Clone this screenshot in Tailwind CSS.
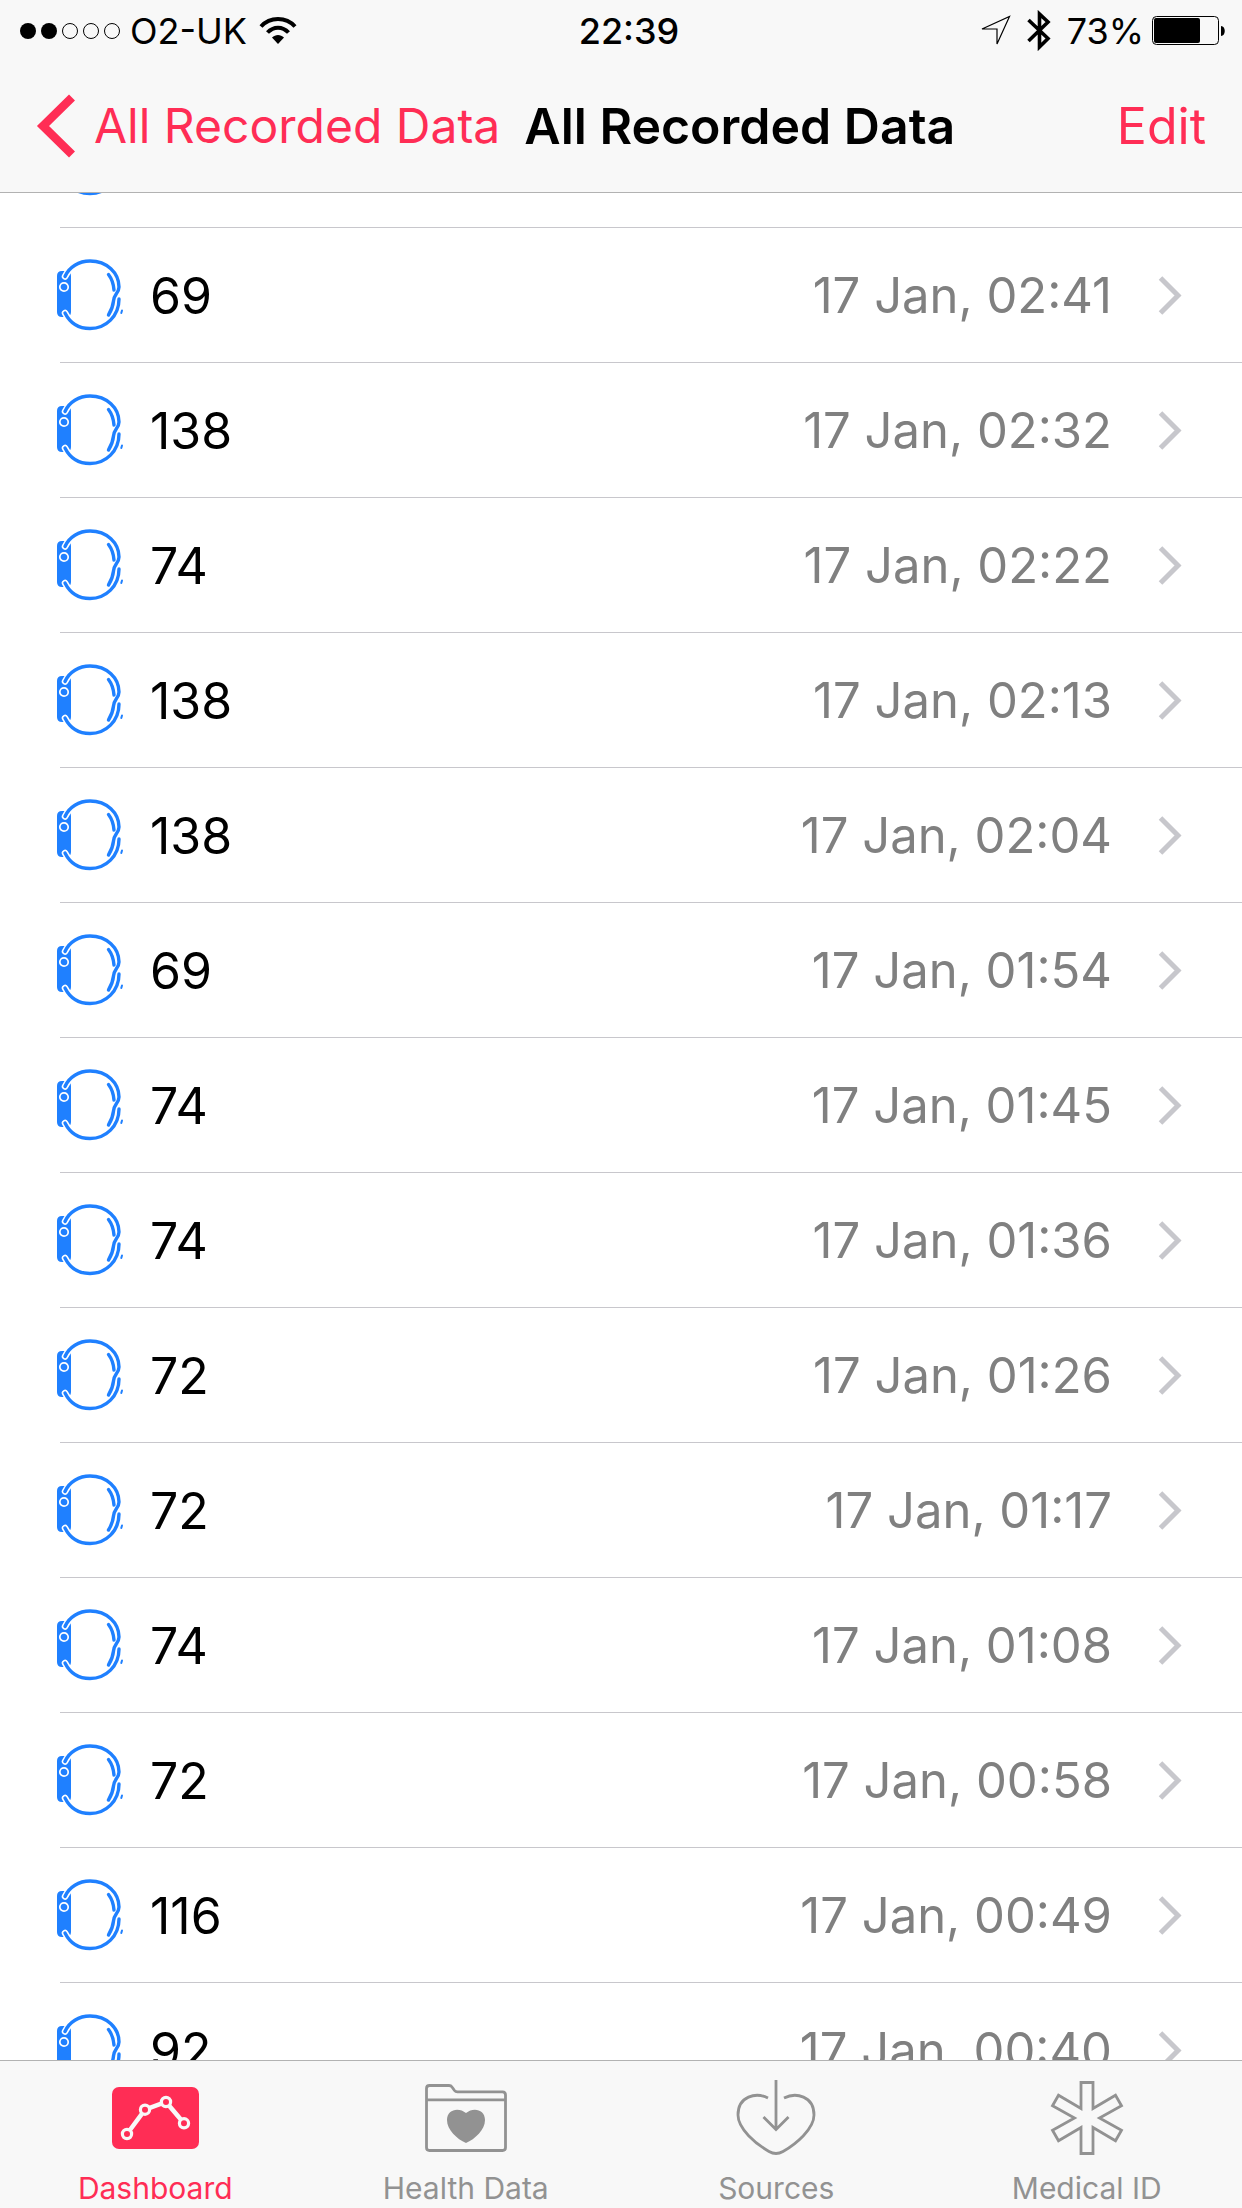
<!DOCTYPE html>
<html lang="en">
<head>
    <meta charset="UTF-8">
    <meta name="viewport" content="width=device-width, initial-scale=1.0">
    <title>All Recorded Data</title>
    <script src="https://cdn.jsdelivr.net/npm/@tailwindcss/browser@4"></script>
</head>
<body class="h-screen flex flex-col overflow-hidden bg-white text-black font-['Inter',sans-serif]">

    <!-- Shared icons -->
    <svg class="hidden" aria-hidden="true">
        <symbol id="watch" viewBox="-4 1 70 72" overflow="visible">
            <path d="M-3 17Q-3 12 2 12H6Q11 12 11 17V53Q11 58 6 58H2Q-3 58 -3 53Z" fill="#1f80ff"/>
            <g fill="none" stroke-linecap="round">
                <path d="M5 17.5L8 12.5M5 54L8 59" stroke="#fff" stroke-width="6.5"/>
                <circle cx="4" cy="28" r="4.2" stroke="#fff" stroke-width="1.7"/>
                <g stroke="#1f80ff" stroke-width="3.4">
                    <path d="M5 17.5C9 8 19 2 30 2C47 2 59 14 59 28C59 34 54 35 53.500 42C53 47 51 52 48.500 56"/>
                    <path d="M5 54C10 64 19 69.500 30 69.500C46 69.500 59 57 59 40"/>
                    <path d="M48.500 15.500C52 20 53.500 25 54 31"/>
                </g>
                <path d="M62 51.500L61.300 54" stroke="#1f80ff" stroke-width="2"/>
            </g>
        </symbol>
        <symbol id="chevron" viewBox="0 0 24 40">
            <path d="M2.500 2L20 19.500L2.500 37" fill="none" stroke="#c7c7cc" stroke-width="5"/>
        </symbol>
    </svg>

    <header class="shrink-0 bg-[#f8f8f8] border-b border-[#b2b2b2]">
        <div class="relative h-[60px] pt-px pl-5 pr-4 flex items-center justify-between text-[36px] leading-[60px]">
            <div class="flex items-center">
                <svg class="w-[102px] h-4" viewBox="0 0 102 16" role="img" aria-label="Signal strength">
                    <circle cx="8" cy="8" r="8"/>
                    <circle cx="29" cy="8" r="8"/>
                    <g fill="none" stroke="#000" stroke-width="1">
                        <circle cx="50" cy="8" r="7.500"/>
                        <circle cx="71" cy="8" r="7.500"/>
                        <circle cx="92" cy="8" r="7.500"/>
                    </g>
                </svg>
                <span class="ml-2">O2-UK</span>
                <svg class="ml-3 w-[38px] h-7" viewBox="0 0 38 28" role="img" aria-label="Wi-Fi">
                    <g fill="none" stroke="#000" stroke-width="4">
                        <path d="M2 9.500C11 -0.500 27 -0.500 36 9.500"/>
                        <path d="M8.500 15.500C14.500 9 23.500 9 29.500 15.500"/>
                    </g>
                    <path d="M13 20.500C16.500 17 21.500 17 25 20.500L19 27Z"/>
                </svg>
            </div>
            <span class="absolute left-1/2 -translate-x-1/2 ml-2 font-medium">22:39</span>
            <div class="flex items-center">
                <svg class="w-[31px] h-[31px]" viewBox="0 0 31 31" role="img" aria-label="Location">
                    <path d="M2 14L29.500 1.500L17 29V14Z" fill="none" stroke="#000" stroke-width="1.200"/>
                </svg>
                <svg class="ml-4 w-6 h-[42px]" viewBox="0 0 24 42" role="img" aria-label="Bluetooth">
                    <path d="M1.500 10L21 28.500L12.500 37V4L21 12L1.500 31" fill="none" stroke="#000" stroke-width="3.600"/>
                </svg>
                <span class="ml-4">73%</span>
                <svg class="ml-2 w-[74px] h-[30px]" viewBox="0 0 74 30" role="img" aria-label="Battery">
                    <rect x="0.500" y="0.500" width="66" height="28" rx="4" fill="none" stroke="#000" stroke-width="1"/>
                    <rect x="2" y="2" width="46" height="25" rx="2"/>
                    <path d="M69 10C74 10 74 20 69 20Z"/>
                </svg>
            </div>
        </div>
        <nav class="h-[132px] pl-9 pr-9 flex items-center whitespace-nowrap text-[50px] leading-[60px]">
            <a href="#" class="flex items-center text-[48px] text-[#ff2d55]">
                <svg class="w-10 h-16" viewBox="0 0 40 64" aria-hidden="true">
                    <path d="M36 3.500L7 32L36 60.500" fill="none" stroke="#ff2d55" stroke-width="8.500"/>
                </svg>
                <span class="ml-[18px]">All Recorded Data</span>
            </a>
            <h1 class="ml-6 font-semibold">All Recorded Data</h1>
            <button type="button" class="ml-auto text-[#ff2d55]">Edit</button>
        </nav>
    </header>

    <main class="flex-1 min-h-0 overflow-hidden">
        <!-- The list is scrolled so that the first row is mostly under the header -->
        <ul id="records" class="-mt-[100px]">
            <li class="ml-[60px] h-[135px] pt-0.5 border-b border-[#c8c7cc] flex items-center">
                <svg class="-ml-1 w-[70px] h-[72px] overflow-visible" aria-hidden="true"><use href="#watch"/></svg>
            </li>
        </ul>
    </main>

    <nav class="shrink-0 h-[148px] grid grid-cols-4 bg-[#f8f8f8] border-t border-[#b2b2b2] text-[30px] leading-[36px] text-[#929292]">
        <a href="#" class="pt-[18px] flex flex-col items-center gap-[13px] text-[#ff2d55]" aria-current="page">
            <svg class="w-[90px] h-[78px]" viewBox="0 0 90 78" aria-hidden="true">
                <rect x="2" y="8" width="87" height="62" rx="7" fill="#ff2d55"/>
                <path d="M17 55L35 30.700L56 23L74 44.300" fill="none" stroke="#f8f8f8" stroke-width="4.500"/>
                <g fill="#ff2d55" stroke="#f8f8f8" stroke-width="3.200">
                    <circle cx="17" cy="55" r="4.600"/>
                    <circle cx="35" cy="30.700" r="4.600"/>
                    <circle cx="56" cy="23" r="4.600"/>
                    <circle cx="74" cy="44.300" r="4.600"/>
                </g>
            </svg>
            <span>Dashboard</span>
        </a>
        <a href="#" class="pt-[18px] flex flex-col items-center gap-[13px]">
            <svg class="w-[90px] h-[78px]" viewBox="0 0 90 78" aria-hidden="true">
                <g fill="none" stroke="#929292" stroke-width="2.800">
                    <path d="M5.500 9.500Q5.500 6.500 8.500 6.500H28Q30 6.500 31 8L33.500 11.500Q34.500 12.800 36.500 12.800H81.500Q84.500 12.800 84.500 16V68.500Q84.500 71.500 81.500 71.500H8.500Q5.500 71.500 5.500 68.500Z"/>
                    <path d="M5.500 20.800H84.500"/>
                </g>
                <path d="M45 64C36 60 26 51 26 41C26 30 38 28 45 34C52 28 64 30 64 41C64 51 54 60 45 64Z" fill="#929292"/>
            </svg>
            <span>Health Data</span>
        </a>
        <a href="#" class="pt-[18px] flex flex-col items-center gap-[13px]">
            <svg class="w-[90px] h-[78px]" viewBox="0 0 90 78" aria-hidden="true">
                <g fill="none" stroke="#929292" stroke-width="2.800">
                    <path d="M37 19C25 13 7 17 7 36C7 50 25 65 38 72.500Q45 76.500 52 72.500C65 65 83 50 83 36C83 17 65 13 53 19"/>
                    <path d="M45 1V50M32.500 38L45 50.500L57.500 38"/>
                </g>
            </svg>
            <span>Sources</span>
        </a>
        <a href="#" class="pt-[18px] flex flex-col items-center gap-[13px]">
            <svg class="w-[90px] h-[78px]" viewBox="0 0 90 78" aria-hidden="true">
                <path d="M39 3.500H51V29.500L73.500 16.200L79.500 26.700L57.500 39L79.500 51.300L73.500 61.800L51 48.500V74.500H39V48.500L16.500 61.800L10.500 51.300L32.500 39L10.500 26.700L16.500 16.200L39 29.500Z" fill="none" stroke="#929292" stroke-width="2.800"/>
            </svg>
            <span>Medical ID</span>
        </a>
    </nav>

    <script>
        const records = [
            ['69', '02:41'], ['138', '02:32'], ['74', '02:22'], ['138', '02:13'],
            ['138', '02:04'], ['69', '01:54'], ['74', '01:45'], ['74', '01:36'],
            ['72', '01:26'], ['72', '01:17'], ['74', '01:08'], ['72', '00:58'],
            ['116', '00:49'], ['92', '00:40']
        ];

        const list = document.getElementById('records');
        records.forEach(([value, time]) => {
            list.insertAdjacentHTML('beforeend', `
                <li class="ml-[60px] h-[135px] border-b border-[#c8c7cc]">
                    <a href="#" class="h-full pt-0.5 pr-[60px] flex items-center text-[50px] leading-[60px]">
                        <svg class="-ml-1 w-[70px] h-[72px] overflow-visible" aria-hidden="true"><use href="#watch"/></svg>
                        <span class="ml-6">${value}</span>
                        <span class="ml-auto text-[49px] text-[#808080]">17 Jan, ${time}</span>
                        <svg class="ml-[46px] w-6 h-10" aria-hidden="true"><use href="#chevron"/></svg>
                    </a>
                </li>`);
        });
    </script>
</body>
</html>
